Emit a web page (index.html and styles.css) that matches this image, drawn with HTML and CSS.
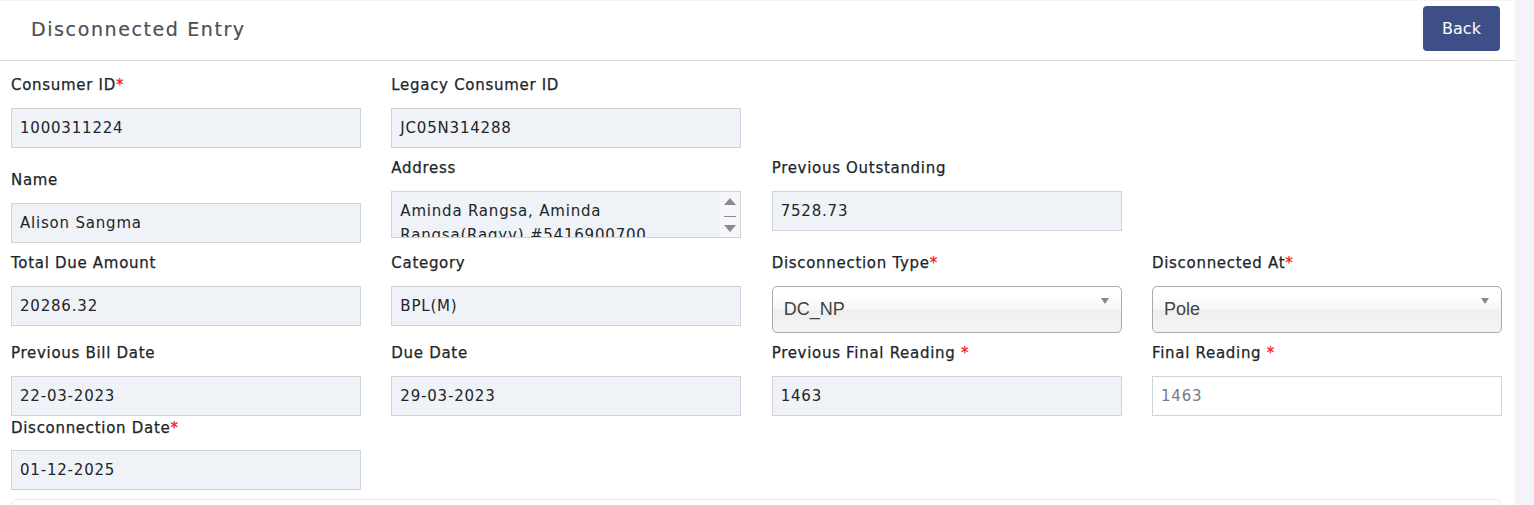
FILE: index.html
```html
<!DOCTYPE html>
<html>
<head>
<meta charset="utf-8">
<link rel="stylesheet" href="styles.css">
</head>
<body>
<div class="panel">
  <div class="header">
    <h4 class="title">Disconnected Entry</h4>
    <button class="btn-back">Back</button>
  </div>
  <div class="body">
    <div class="row r1">
      <div class="field"><label>Consumer ID<span class="req">*</span></label><div class="ctl ro">1000311224</div></div>
      <div class="field"><label>Legacy Consumer ID</label><div class="ctl ro">JC05N314288</div></div>
    </div>
    <div class="row r2">
      <div class="field f-name"><label>Name</label><div class="ctl ro">Alison Sangma</div></div>
      <div class="field"><label>Address</label>
        <div class="ctl ro area">
          <div class="area-text">Aminda Rangsa, Aminda<br>Rangsa(Raqyv) #5416900700</div>
          <div class="scroll">
            <span class="tri up"></span>
            <span class="sep"></span>
            <span class="tri down"></span>
          </div>
        </div>
      </div>
      <div class="field"><label>Previous Outstanding</label><div class="ctl ro">7528.73</div></div>
    </div>
    <div class="row r3">
      <div class="field"><label>Total Due Amount</label><div class="ctl ro">20286.32</div></div>
      <div class="field"><label>Category</label><div class="ctl ro">BPL(M)</div></div>
      <div class="field"><label>Disconnection Type<span class="req">*</span></label><div class="chosen"><span>DC_NP</span><i class="caret"></i></div></div>
      <div class="field"><label>Disconnected At<span class="req">*</span></label><div class="chosen"><span>Pole</span><i class="caret"></i></div></div>
    </div>
    <div class="row r4">
      <div class="field"><label>Previous Bill Date</label><div class="ctl ro">22-03-2023</div></div>
      <div class="field"><label>Due Date</label><div class="ctl ro">29-03-2023</div></div>
      <div class="field"><label>Previous Final Reading <span class="req">*</span></label><div class="ctl ro">1463</div></div>
      <div class="field"><label>Final Reading <span class="req">*</span></label><div class="ctl edit">1463</div></div>
    </div>
    <div class="row r5">
      <div class="field"><label class="tight">Disconnection Date<span class="req">*</span></label><div class="ctl ro">01-12-2025</div></div>
    </div>
    <div class="card"></div>
  </div>
</div>
</body>
</html>
```

FILE: styles.css
```css
* { box-sizing: border-box; }
html, body { margin: 0; padding: 0; }
body {
  background: #f3f3f9;
  font-family: "DejaVu Sans", "Liberation Sans", sans-serif;
  color: #212529;
  height: 505px;
  overflow: hidden;
}
.panel {
  width: 1515px;
  margin-top: 1px;
  background: #fff;
  height: 504px;
}
.header {
  height: 60px;
  border-bottom: 1px solid #dcdcdf;
  display: flex;
  align-items: center;
  justify-content: space-between;
  padding: 0 15px 4px 31px;
}
.title {
  margin: 0;
  font-size: 19px;
  font-weight: normal;
  letter-spacing: 1.6px;
  color: #495057;
  -webkit-text-stroke: 0.2px #495057;
}
.btn-back {
  width: 77px;
  height: 45px;
  background: #3d4f86;
  color: #fff;
  border: none;
  border-radius: 4px;
  font-family: inherit;
  font-size: 16px;
  margin-top: 0;
}
.body {
  padding: 12px 13px 0 11px;
}
.row {
  display: grid;
  grid-template-columns: repeat(4, 350px);
  column-gap: 30.33px;
  align-items: start;
}
.r2 { margin-top: 8px; }
.r3 { margin-top: 8px; }
.r4 { margin-top: 8px; }
.r5 { margin-top: 0; }
.f-name { margin-top: 12px; }
label {
  display: block;
  font-size: 15px;
  line-height: 20px;
  padding-top: 2px;
  letter-spacing: 0.7px;
  margin-bottom: 13px;
  color: #212529;
  -webkit-text-stroke: 0.25px #212529;
}
label.tight { margin-bottom: 12px; }
.req { color: #f01818; -webkit-text-stroke: 0.25px #f01818; }
.ctl {
  height: 40px;
  border: 1px solid #ced4da;
  padding: 0 8px;
  font-size: 15px;
  letter-spacing: 0.8px;
  display: flex;
  align-items: center;
  color: #212529;
}
.ro { background: #eff2f7; }
.edit { background: #fff; color: #74788d; }
.area {
  height: 47px;
  position: relative;
  align-items: flex-start;
  overflow: hidden;
  padding-top: 7px;
}
.area-text { line-height: 24px; white-space: nowrap; }
.scroll {
  position: absolute;
  right: 0;
  top: 0;
  bottom: 0;
  width: 20px;
  background: #f4f6fa;
  display: flex;
  flex-direction: column;
  align-items: center;
  padding-top: 6px;
}
.tri { width: 0; height: 0; border-left: 6px solid transparent; border-right: 6px solid transparent; }
.tri.up { border-bottom: 7px solid #8a8a8a; }
.tri.down { border-top: 7px solid #8a8a8a; }
.sep { width: 12px; height: 1px; background: #8a8a8a; margin: 11px 0 8px; }
.chosen {
  height: 47px;
  border: 1px solid #aaa;
  border-radius: 5px;
  background: linear-gradient(#fff 20%, #f6f6f6 50%, #eee 52%, #f4f4f4 100%);
  display: flex;
  align-items: center;
  padding: 0 11px;
  position: relative;
  font-family: "Liberation Sans", Arial, sans-serif;
  font-size: 18px;
  color: #444;
}
.caret {
  position: absolute;
  right: 12px;
  top: 11px;
  width: 0; height: 0;
  border-left: 4px solid transparent;
  border-right: 4px solid transparent;
  border-top: 6px solid #888;
}
.card {
  margin-top: 9px;
  height: 20px;
  border: 1px solid #e9e9ef;
  border-radius: 6px;
  width: 1491px;
}
```
